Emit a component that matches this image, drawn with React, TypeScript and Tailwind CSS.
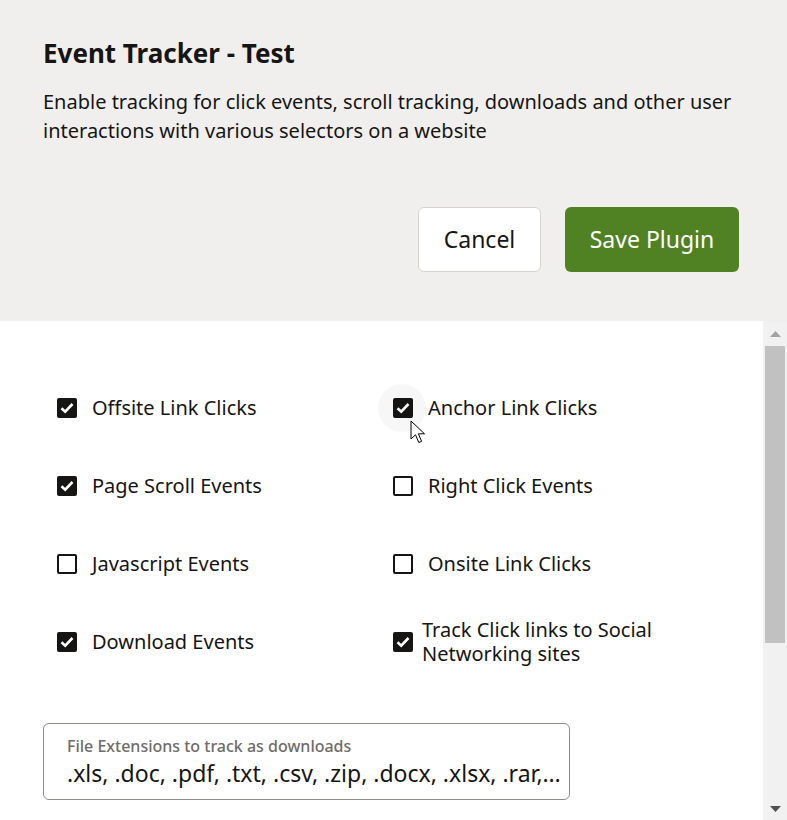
import { useState } from "react";

type Item = { label: string; checked: boolean };

const leftItems: Item[] = [
  { label: "Offsite Link Clicks", checked: true },
  { label: "Page Scroll Events", checked: true },
  { label: "Javascript Events", checked: false },
  { label: "Download Events", checked: true },
];

const rightItems: Item[] = [
  { label: "Anchor Link Clicks", checked: true },
  { label: "Right Click Events", checked: false },
  { label: "Onsite Link Clicks", checked: false },
  { label: "Track Click links to Social Networking sites", checked: true },
];

function Box({ checked }: { checked: boolean }) {
  if (checked) {
    return (
      <span className="flex h-[20px] w-[20px] shrink-0 items-center justify-center rounded-[2px] bg-[#161513]">
        <svg width="14" height="12" viewBox="0 0 14 12" fill="none">
          <path d="M1.5 6.2 L5.2 9.6 L12.5 2" stroke="#fff" strokeWidth="2.6" />
        </svg>
      </span>
    );
  }
  return <span className="h-[20px] w-[20px] shrink-0 rounded-[2px] border-2 border-[#161513] bg-white" />;
}

function CheckRow({ item, tight }: { item: Item; tight?: boolean }) {
  const [on, setOn] = useState(item.checked);
  return (
    <label
      className={`flex h-[78px] cursor-pointer items-center pl-[14px] ${tight ? "gap-[9px]" : "gap-[15px]"}`}
      onClick={() => setOn(!on)}
    >
      <Box checked={on} />
      <span className="text-[20px] leading-[24px] text-[#161513]">{item.label}</span>
    </label>
  );
}

function Cursor() {
  return (
    <svg className="absolute left-[410px] top-[420px]" width="18" height="26" viewBox="0 0 18 26">
      <path
        d="M1 1 L1 19 L5.5 14.8 L8.8 22.5 L11.6 21.3 L8.4 13.8 L14.5 13.8 Z"
        fill="#fff"
        stroke="#000"
        strokeWidth="1"
        strokeLinejoin="miter"
      />
    </svg>
  );
}

export default function App() {
  return (
    <div
      className="relative flex h-[820px] w-full flex-col overflow-hidden bg-white text-[#161513]"
      style={{ fontFamily: '"Noto Sans", "Open Sans", sans-serif' }}
    >
      {/* en-tête */}
      <div className="h-[321px] shrink-0 bg-[#f1efed] pl-[43px] pr-[48px] pt-[36px]">
        <h1 className="text-[26px] font-bold leading-[34px]">Event Tracker - Test</h1>
        <p className="mt-[17px] w-[700px] text-[20px] leading-[29px]">
          Enable tracking for click events, scroll tracking, downloads and other user interactions with various
          selectors on a website
        </p>
        <div className="mt-[62px] flex justify-end gap-[24px]">
          <button
            type="button"
            className="h-[65px] w-[123px] rounded-[6px] border border-[#d6d3cf] bg-white text-[23px]"
          >
            Cancel
          </button>
          <button
            type="button"
            className="h-[65px] w-[174px] rounded-[6px] bg-[#508223] text-[23px] text-white"
          >
            Save Plugin
          </button>
        </div>
      </div>

      {/* corps */}
      <div className="flex min-h-0 flex-1">
        <div className="min-w-0 flex-1 overflow-hidden pl-[43px] pt-[48px]">
          <div className="grid w-[672px] grid-cols-2">
            <div>
              {leftItems.map((it) => (
                <CheckRow key={it.label} item={it} />
              ))}
            </div>
            <div>
              {rightItems.map((it, i) => (
                <CheckRow key={it.label} item={it} tight={i === 3} />
              ))}
            </div>
          </div>

          <div className="mt-[42px] h-[77px] w-[527px] rounded-[6px] border border-[#8f8c88] pl-[23px] pr-[7px] pt-[11px]">
            <div className="text-[16px] font-medium leading-[22px] text-[#6f6c69]">
              File Extensions to track as downloads
            </div>
            <div className="truncate text-[23px] leading-[32px]">
              .xls, .doc, .pdf, .txt, .csv, .zip, .docx, .xlsx, .rar, .ppt, .pptx
            </div>
          </div>
        </div>

        {/* barre de défilement */}
        <div className="flex w-[24px] shrink-0 flex-col bg-[#f1f1f1]">
          <div className="flex h-[25px] items-center justify-center">
            <svg width="11" height="6" viewBox="0 0 11 6">
              <path d="M5.5 0 L11 6 L0 6 Z" fill="#a3a3a3" />
            </svg>
          </div>
          <div className="mx-[2px] h-[297px] bg-[#c1c1c1]" />
          <div className="flex-1" />
          <div className="flex h-[22px] items-center justify-center">
            <svg width="11" height="6" viewBox="0 0 11 6">
              <path d="M0 0 L11 0 L5.5 6 Z" fill="#505050" />
            </svg>
          </div>
        </div>
      </div>

      <div className="pointer-events-none absolute left-[378px] top-[384px] h-[48px] w-[48px] rounded-full bg-black/[0.03]" />
      <Cursor />
    </div>
  );
}
